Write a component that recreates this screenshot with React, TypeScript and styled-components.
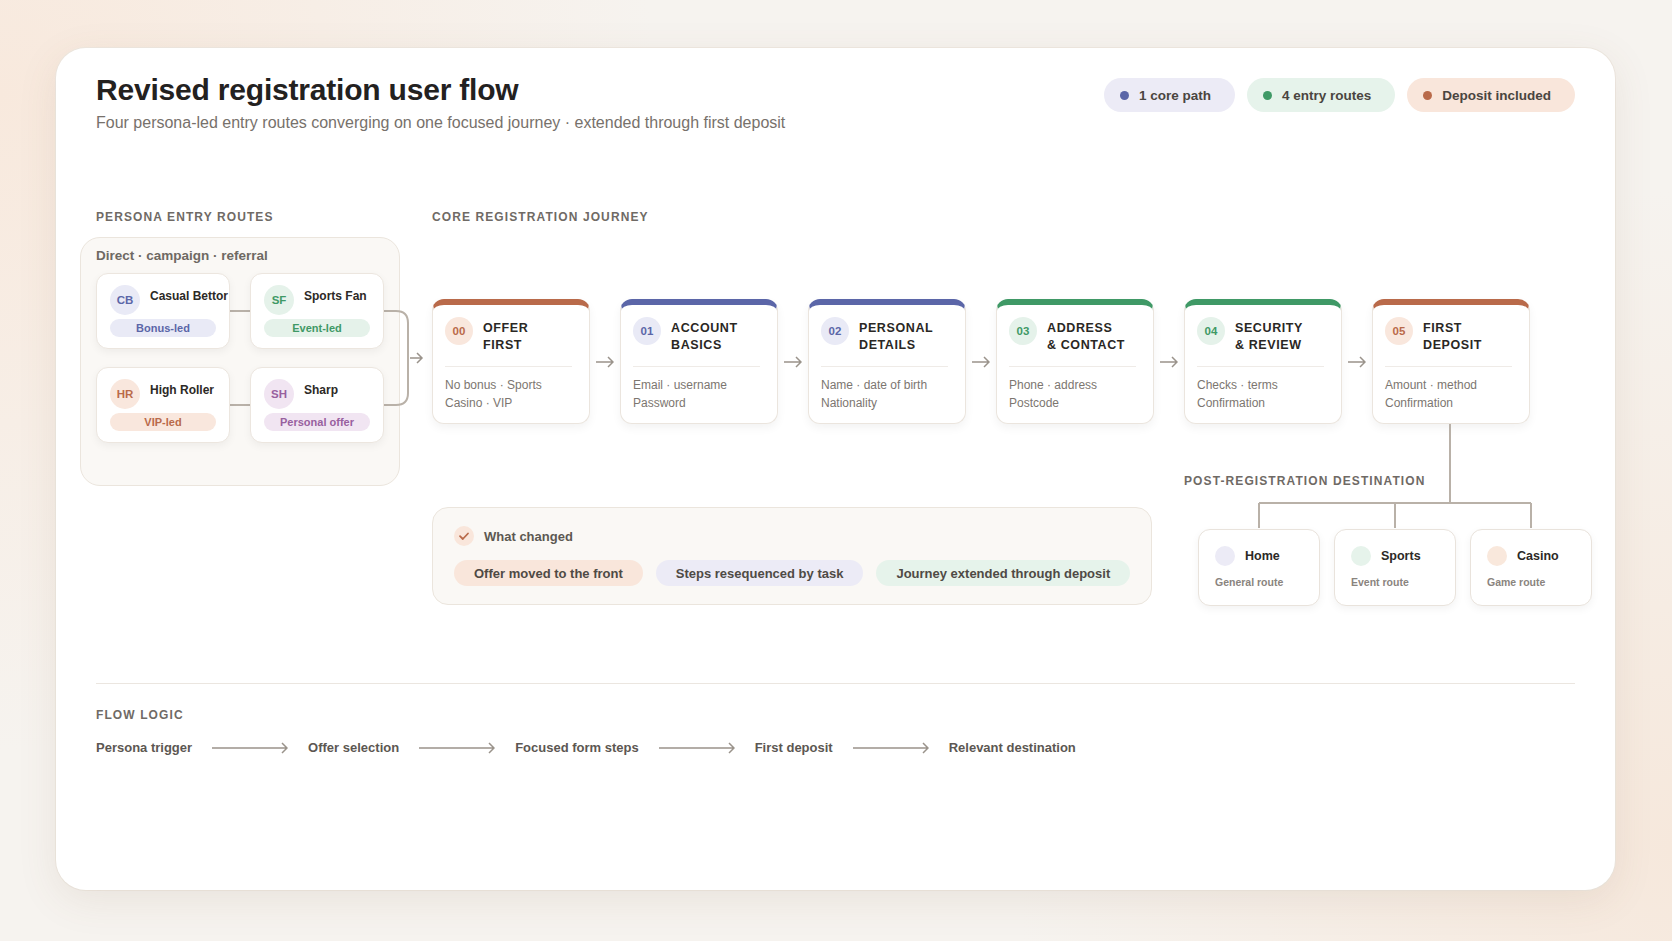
import React from "react";
import styled, { createGlobalStyle } from "styled-components";

const Global = createGlobalStyle`
  html, body { margin: 0; padding: 0; }
  body {
    font-family: "Liberation Sans", Arial, sans-serif;
    background: #f6f3ef;
    background-image: radial-gradient(circle at 0% 10%, #f8e9dd 0, transparent 35%),
      radial-gradient(circle at 100% 90%, #f6e8dc 0, transparent 35%);
    width: 1672px; height: 941px; overflow: hidden;
  }
`;

const C = {
  orange: "#b96a4a", orangeBg: "#f9e7dd",
  indigo: "#5b66a8", indigoBg: "#e9eaf6",
  green: "#3f9966", greenBg: "#e5f2ea",
  purple: "#98609f", purpleBg: "#f1e5f2",
};

const Page = styled.div`padding: 48px 0 0 56px;`;
const Card = styled.div`
  width: 1559px; height: 842px; box-sizing: border-box; background: #fff;
  border-radius: 30px; box-shadow: 0 10px 40px rgba(120,90,60,0.10), 0 0 0 1px #efe9e2;
  padding: 22px 40px 0 40px; position: relative;
`;
const Header = styled.div`display: flex; justify-content: space-between; align-items: flex-start;`;
const Title = styled.h1`margin: 0; font-size: 30px; font-weight: 700; color: #23211f; line-height: 40px; letter-spacing: -0.2px;`;
const Sub = styled.div`margin-top: 4px; font-size: 16px; color: #77716b;`;
const Pills = styled.div`display: flex; gap: 12px; margin-top: 8px;`;
const Pill = styled.div<{ bg: string; dot: string }>`
  height: 34px; border-radius: 17px; background: ${p => p.bg}; display: flex; align-items: center;
  padding: 0 24px 0 16px; gap: 10px; font-size: 13.5px; font-weight: 700; color: #4a4540;
  &::before { content: ""; width: 9px; height: 9px; border-radius: 50%; background: ${p => p.dot}; }
`;

const Main = styled.div`display: flex; margin-top: 78px;`;
const Label = styled.div`font-size: 12px; font-weight: 700; letter-spacing: 1.1px; color: #6f6a65; text-transform: uppercase;`;
const LeftCol = styled.div`width: 336px; flex-shrink: 0; position: relative;`;
const PersonaBox = styled.div`
  margin: 13px 0 0 -16px; width: 320px; height: 249px; box-sizing: border-box; background: #faf8f5;
  border: 1px solid #ebe5dd; border-radius: 20px; padding: 10px 15px;
`;
const BoxLabel = styled.div`font-size: 13.5px; font-weight: 700; color: #6e6963;`;
const PersonaGrid = styled.div`display: grid; grid-template-columns: 134px 134px; column-gap: 20px; row-gap: 18px; margin-top: 10px; position: relative;`;
const PCard = styled.div`
  height: 76px; box-sizing: border-box; background: #fff; border: 1px solid #ece6df; border-radius: 12px;
  box-shadow: 0 3px 8px rgba(0,0,0,0.05); padding: 11px 13px; position: relative; z-index: 1;
`;
const PTop = styled.div`display: flex; align-items: flex-start; gap: 10px;`;
const Avatar = styled.div<{ bg: string; fg: string; size?: number }>`
  width: ${p => p.size || 30}px; height: ${p => p.size || 30}px; border-radius: 50%; background: ${p => p.bg}; color: ${p => p.fg};
  display: flex; align-items: center; justify-content: center; font-size: 11.5px; font-weight: 700; flex-shrink: 0;
`;
const PName = styled.div`font-size: 12px; font-weight: 700; color: #2c2926; margin-top: 4px; white-space: nowrap;`;
const Tag = styled.div<{ bg: string; fg: string }>`
  margin-top: 4px; height: 18px; border-radius: 9px; background: ${p => p.bg}; color: ${p => p.fg};
  font-size: 11px; font-weight: 700; display: flex; align-items: center; justify-content: center;
`;
const Connector = styled.svg`position: absolute; left: 0; top: 0; overflow: visible; z-index: 0; pointer-events: none;`;

const RightCol = styled.div`display: flex; flex-direction: column; flex-shrink: 0;`;
const Steps = styled.div`display: flex; align-items: flex-start; margin-top: 75px;`;
const Step = styled.div<{ color: string }>`
  width: 158px; height: 125px; flex-shrink: 0; box-sizing: border-box; background: #fff; border: 1px solid #ebe5de;
  border-radius: 12px; box-shadow: 0 4px 10px rgba(0,0,0,0.05); border-top: 6px solid ${p => p.color};
  padding: 12px 12px 0 12px;
`;
const StepTop = styled.div`display: flex; gap: 10px; align-items: flex-start; padding-bottom: 12px; border-bottom: 1.5px solid #efebe7; margin: 0 5px 0 0;`;
const StepTitle = styled.div`font-size: 12.5px; font-weight: 700; color: #2a2724; letter-spacing: 0.6px; line-height: 17px; margin-top: 3px;`;
const StepBody = styled.div`font-size: 12px; color: #7c7670; line-height: 18px; margin-top: 9px;`;
const ArrowBox = styled.div`width: 30px; flex-shrink: 0; height: 125px; display: flex; align-items: center; justify-content: center;`;

const Lower = styled.div`display: flex; align-items: flex-start;`;
const Changed = styled.div`
  margin-top: 83px; width: 720px; flex-shrink: 0; height: 98px; box-sizing: border-box; background: #faf8f5;
  border: 1px solid #ebe5dd; border-radius: 16px; padding: 18px 21px;
`;
const ChangedHead = styled.div`display: flex; align-items: center; gap: 10px; font-size: 13px; font-weight: 700; color: #5d5852;`;
const ChangedRow = styled.div`display: flex; gap: 13px; margin-top: 14px;`;
const CPill = styled.div<{ bg: string }>`
  height: 26px; border-radius: 13px; background: ${p => p.bg}; padding: 0 20px; display: flex; align-items: center;
  font-size: 13px; font-weight: 700; color: #4f4a45; white-space: nowrap;
`;

const Dest = styled.div`margin-left: 32px; width: 408px; flex-shrink: 0; position: relative; padding-top: 50px;`;
const DestRow = styled.div`display: flex; gap: 14px; margin-top: 41px; margin-left: 14px; position: relative; z-index: 1;`;
const DCard = styled.div`
  width: 122px; height: 77px; flex-shrink: 0; box-sizing: border-box; background: #fff; border: 1px solid #e9e3dc; border-radius: 12px;
  box-shadow: 0 3px 8px rgba(0,0,0,0.05); padding: 16px 16px;
`;
const DTop = styled.div`display: flex; align-items: center; gap: 10px; font-size: 12.5px; font-weight: 700; color: #2c2926;`;
const DSub = styled.div`font-size: 10.5px; color: #8a847e; margin-top: 10px; font-weight: 600;`;
const Tree = styled.svg`position: absolute; left: 0; top: 0; z-index: 0;`;
const DestLabel = styled(Label)`position: relative; z-index: 1;`;

const Divider = styled.div`height: 1px; background: #ebe6e0; margin-top: 77px;`;
const FlowLabel = styled(Label)`margin-top: 24px;`;
const FlowRow = styled.div`display: flex; align-items: center; gap: 20px; margin-top: 18px; font-size: 13px; font-weight: 700; color: #5c5752;`;

const Arrow = ({ w = 14 }: { w?: number }) => (
  <svg width={w} height="12" viewBox={`0 0 ${w} 12`}>
    <path d={`M0 6 H${w - 1} M${w - 6} 1 L${w - 1} 6 L${w - 6} 11`} stroke="#9a938b" strokeWidth="1.5" fill="none" />
  </svg>
);

const personas = [
  { i: "CB", n: "Casual Bettor", t: "Bonus-led", bg: C.indigoBg, fg: C.indigo },
  { i: "SF", n: "Sports Fan", t: "Event-led", bg: C.greenBg, fg: C.green },
  { i: "HR", n: "High Roller", t: "VIP-led", bg: C.orangeBg, fg: C.orange },
  { i: "SH", n: "Sharp", t: "Personal offer", bg: C.purpleBg, fg: C.purple },
];
const steps = [
  { n: "00", t: ["OFFER", "FIRST"], b: ["No bonus · Sports", "Casino · VIP"], c: C.orange, bg: C.orangeBg },
  { n: "01", t: ["ACCOUNT", "BASICS"], b: ["Email · username", "Password"], c: C.indigo, bg: C.indigoBg },
  { n: "02", t: ["PERSONAL", "DETAILS"], b: ["Name · date of birth", "Nationality"], c: C.indigo, bg: C.indigoBg },
  { n: "03", t: ["ADDRESS", "& CONTACT"], b: ["Phone · address", "Postcode"], c: C.green, bg: C.greenBg },
  { n: "04", t: ["SECURITY", "& REVIEW"], b: ["Checks · terms", "Confirmation"], c: C.green, bg: C.greenBg },
  { n: "05", t: ["FIRST", "DEPOSIT"], b: ["Amount · method", "Confirmation"], c: C.orange, bg: C.orangeBg },
];
const dests = [
  { n: "Home", s: "General route", bg: "#ecebf6" },
  { n: "Sports", s: "Event route", bg: "#e6f3eb" },
  { n: "Casino", s: "Game route", bg: "#f9e8dc" },
];
const flow = ["Persona trigger", "Offer selection", "Focused form steps", "First deposit", "Relevant destination"];

export default function App() {
  return (
    <Page>
      <Global />
      <Card>
        <Header>
          <div>
            <Title>Revised registration user flow</Title>
            <Sub>Four persona-led entry routes converging on one focused journey · extended through first deposit</Sub>
          </div>
          <Pills>
            <Pill bg="#ecebf6" dot={C.indigo}>1 core path</Pill>
            <Pill bg="#e6f3eb" dot={C.green}>4 entry routes</Pill>
            <Pill bg="#f9e6db" dot={C.orange}>Deposit included</Pill>
          </Pills>
        </Header>
        <Main>
          <LeftCol>
            <Label>Persona entry routes</Label>
            <PersonaBox>
              <BoxLabel>Direct · campaign · referral</BoxLabel>
              <PersonaGrid>
                <Connector width="300" height="200">
                  <path d="M134 38 H300 Q312 38 312 50 V120 Q312 132 300 132 H134" stroke="#b9b1a8" strokeWidth="2" fill="none" />
                  <path d="M314 85 H326 M321 80 L326 85 L321 90" stroke="#9a938b" strokeWidth="1.5" fill="none" />
                </Connector>
                {personas.map(p => (
                  <PCard key={p.i}>
                    <PTop>
                      <Avatar bg={p.bg} fg={p.fg}>{p.i}</Avatar>
                      <PName>{p.n}</PName>
                    </PTop>
                    <Tag bg={p.bg} fg={p.fg}>{p.t}</Tag>
                  </PCard>
                ))}
              </PersonaGrid>
            </PersonaBox>
          </LeftCol>
          <RightCol>
            <Label>Core registration journey</Label>
            <Steps>
              {steps.map((s, i) => (
                <React.Fragment key={s.n}>
                  {i > 0 && <ArrowBox><Arrow w={18} /></ArrowBox>}
                  <Step color={s.c}>
                    <StepTop>
                      <Avatar bg={s.bg} fg={s.c} size={28}>{s.n}</Avatar>
                      <StepTitle>{s.t[0]}<br />{s.t[1]}</StepTitle>
                    </StepTop>
                    <StepBody>{s.b[0]}<br />{s.b[1]}</StepBody>
                  </Step>
                </React.Fragment>
              ))}
            </Steps>
            <Lower>
              <Changed>
                <ChangedHead>
                  <svg width="20" height="20" viewBox="0 0 20 20">
                    <circle cx="10" cy="10" r="10" fill="#f9e6db" />
                    <path d="M6 10.2 L8.8 13 L14 7.5" stroke={C.orange} strokeWidth="1.8" fill="none" strokeLinecap="round" strokeLinejoin="round" />
                  </svg>
                  What changed
                </ChangedHead>
                <ChangedRow>
                  <CPill bg="#f9e6db">Offer moved to the front</CPill>
                  <CPill bg="#ecebf6">Steps resequenced by task</CPill>
                  <CPill bg="#e6f3eb">Journey extended through deposit</CPill>
                </ChangedRow>
              </Changed>
              <Dest>
                <Tree width="408" height="104">
                  <path d="M266 0 V79 M75 79 H347 M75 79 V104 M211 79 V104 M347 79 V104" stroke="#b9b1a8" strokeWidth="2" fill="none" />
                </Tree>
                <DestLabel>Post-registration destination</DestLabel>
                <DestRow>
                  {dests.map(d => (
                    <DCard key={d.n}>
                      <DTop><Avatar bg={d.bg} fg="#000" size={20} />{d.n}</DTop>
                      <DSub>{d.s}</DSub>
                    </DCard>
                  ))}
                </DestRow>
              </Dest>
            </Lower>
          </RightCol>
        </Main>
        <Divider />
        <FlowLabel>Flow logic</FlowLabel>
        <FlowRow>
          {flow.map((f, i) => (
            <React.Fragment key={f}>
              {i > 0 && <Arrow w={76} />}
              <span>{f}</span>
            </React.Fragment>
          ))}
        </FlowRow>
      </Card>
    </Page>
  );
}
